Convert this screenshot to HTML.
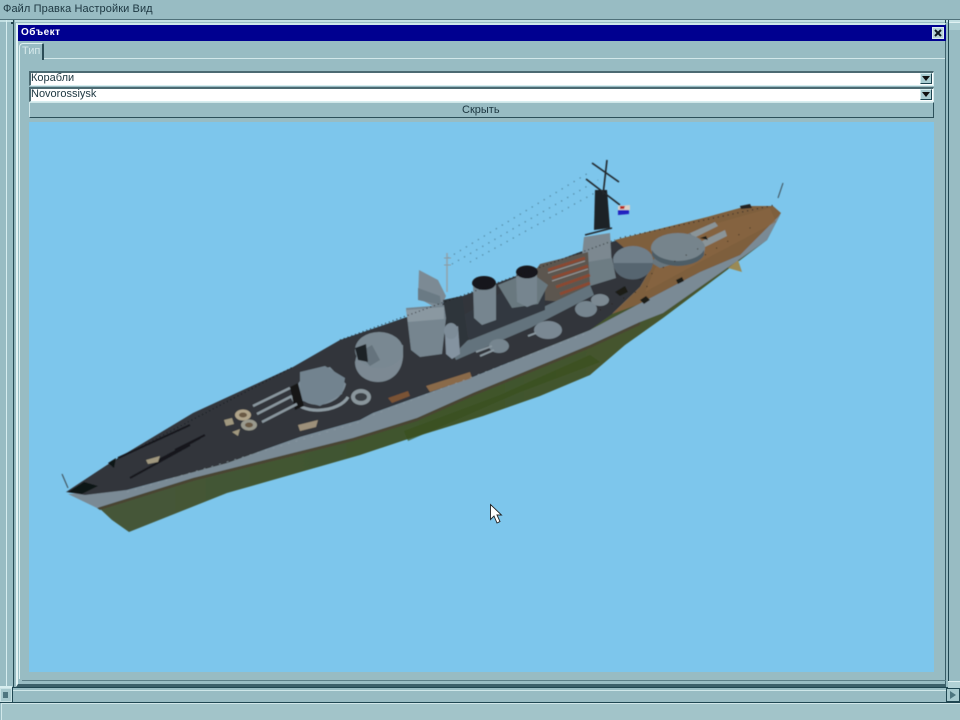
<!DOCTYPE html>
<html lang="ru"><head><meta charset="utf-8"><title>Объект</title>
<style>
html,body{margin:0;padding:0;background:#98bcc3}
#p{position:relative;width:960px;height:720px;overflow:hidden;background:#98bcc3;font-family:"Liberation Sans",sans-serif;font-size:11px;color:#1c3640}
#p div{position:absolute;box-sizing:border-box}
.t{white-space:nowrap;line-height:13px}
.arrow{background:#a9cdd2;border:1px solid;border-color:#d8eef0 #1c4450 #1c4450 #d8eef0}
.cb{background:#fff;border-top:2px solid #4b6a72;border-left:2px solid #4b6a72;border-right:1px solid #d8eef0;border-bottom:1px solid #d8eef0}
</style></head><body><div id="p">
<div class="t" style="left:3px;top:3px;letter-spacing:.1px">Файл Правка Настройки Вид</div>
<div style="left:0;top:19px;width:960px;height:1px;background:#4f717a"></div>
<div style="left:0;top:20px;width:960px;height:2px;background:#c3e0e3"></div>
<div style="left:6px;top:20px;width:1px;height:668px;background:#d6edef"></div>
<div style="left:13px;top:20px;width:1px;height:668px;background:#274c56"></div>
<div style="left:14px;top:20px;width:1px;height:668px;background:#8fb3ba"></div>
<div style="left:11px;top:22px;width:2px;height:2px;background:#23444e"></div>
<div style="left:948px;top:20px;width:1px;height:668px;background:#1f4651"></div>
<div style="left:945px;top:20px;width:1px;height:668px;background:#1f4651"></div>
<div style="left:949px;top:22px;width:11px;height:8px;background:#abcdd2;border-top:1px solid #e0f2f3"></div>
<div style="left:16px;top:23px;width:930px;height:664px;background:#98bcc3;border-left:2px solid #e4f4f5;border-top:2px solid #cfe8ea;border-right:1px solid #3e626c;border-bottom:3px solid #3c606a"></div>
<div style="left:18px;top:25px;width:928px;height:16px;background:#000090"></div>
<div class="t" style="left:21px;top:26px;color:#fff;font-weight:bold;font-size:10px;letter-spacing:.5px">Объект</div>
<div style="left:932px;top:27px;width:12px;height:12px;background:#b7d2d6;border:1px solid #dcecee"><svg width="10" height="10" style="display:block"><path d="M2 2L8 8M8 2L2 8" stroke="#101820" stroke-width="2"/></svg></div>
<div style="left:19px;top:58px;width:926px;height:1px;background:#d2e8ea"></div>
<div style="left:945px;top:58px;width:1px;height:623px;background:#375b65"></div>
<div style="left:19px;top:59px;width:1px;height:620px;background:#dff1f2"></div>
<div style="left:22px;top:680px;width:924px;height:1px;background:#5c7f88"></div>
<div style="left:19px;top:43px;width:25px;height:17px;background:#98bcc3;border-left:1px solid #dff1f2;border-top:1px solid #dff1f2;border-right:2px solid #2b4d57;border-radius:4px 2px 0 0"></div>
<div class="t" style="left:22px;top:45px;color:#d6e9eb">Тип</div>
<div class="cb" style="left:29px;top:71px;width:905px;height:15px"></div>
<div class="t" style="left:31px;top:72px">Корабли</div>
<div class="arrow" style="left:920px;top:73px;width:12px;height:11px"><svg width="10" height="9" style="display:block"><path d="M1 2H9L5 7Z" fill="#111"/></svg></div>
<div class="cb" style="left:29px;top:87px;width:905px;height:15px"></div>
<div class="t" style="left:31px;top:88px">Novorossiysk</div>
<div class="arrow" style="left:920px;top:89px;width:12px;height:11px"><svg width="10" height="9" style="display:block"><path d="M1 2H9L5 7Z" fill="#111"/></svg></div>
<div style="left:29px;top:102px;width:905px;height:16px;background:#98bcc3;border:1px solid;border-color:#cfe6e8 #2c505a #2c505a #cfe6e8"></div>
<div class="t" style="left:462px;top:104px;">Скрыть</div>
<div style="left:29px;top:122px;width:905px;height:550px;background:#7dc6ec"></div>

<svg style="position:absolute;left:0;top:0" width="960" height="720" viewBox="0 0 960 720">
<defs><filter id="b" x="-5%" y="-5%" width="110%" height="110%"><feGaussianBlur stdDeviation=".5"/></filter>
<linearGradient id="g" x1="0" y1="0" x2="1" y2="0"><stop offset="0" stop-color="#46573a"/><stop offset=".5" stop-color="#3f552c"/><stop offset="1" stop-color="#4a5430"/></linearGradient></defs>
<g filter="url(#b)">
<!-- rigging -->
<path d="M448 258L590 172M452 264L598 180M470 262L600 190" stroke="#25404c" stroke-width="1" stroke-dasharray="1 6" fill="none" opacity=".7"/>
<path d="M778 198L783 183M68 488L62 474" stroke="#3a4a50" stroke-width="1" fill="none"/>
<!-- green hull -->
<path d="M97 506L112 520L129 532L227 493L360 455L405 440L483 416L540 396L590 375L625 345L663 318L767 240L780 215L640 300L473 380L353 425L193 470Z" fill="url(#g)"/>
<path d="M404 431L500 395L590 355L600 362L520 392L408 441Z" fill="#39501f" opacity=".7"/>
<path d="M728 268L738 260L742 272L735 270Z" fill="#9a8a55"/>
<!-- grey belt -->
<path d="M68 494L97 508L193 478L353 438L417 418L473 393L590 345L640 322L663 313L767 240L781 213L740 255L700 272L637 305L590 330L473 377L373 413L360 420L300 437L227 463L127 490Z" fill="#7a8a95"/>
<path d="M97 508L193 478L353 438L417 418L473 393L590 345L640 322L640 325L590 348L473 396L417 421L353 441L193 481L100 510Z" fill="#4a4433"/>
<!-- dark deck -->
<path d="M66 492L110 463L193 413L293 367L340 340L407 317L500 282L580 252L618 240L650 270L640 287L612 314L590 330L473 377L373 413L360 420L300 437L227 463L127 490L85 495Z" fill="#30343a"/>
<!-- wood deck -->
<path d="M615 240L707 217L747 206L773 206L781 213L778 217L740 255L700 272L637 305L612 314L640 287L650 270Z" fill="#7e5f3d"/>
<path d="M655 268L700 228L770 208L776 222L700 262L645 292Z" fill="#8a6742" opacity=".55"/>
<!-- forward details -->
<path d="M688 234L715 222L718 226L694 238ZM700 242L725 230L727 236L703 248Z" fill="#8a9498"/>
<path d="M650 262L690 233L705 252L680 262L660 268Z" fill="#68767e"/>
<ellipse cx="678" cy="248" rx="27" ry="15" fill="#76848c"/><path d="M652 250A27 15 0 0 0 704 250L704 255A27 15 0 0 1 652 255Z" fill="#4e5d66"/>
<ellipse cx="633" cy="260" rx="20" ry="14" fill="#6f7f8a"/><path d="M613 263C615 285 650 285 653 263Z" fill="#56656f"/>
<path d="M640 300L646 296L650 300L644 304ZM676 280L682 277L684 281L678 284ZM700 238L706 236L708 240ZM615 292L625 286L628 292L620 296Z" fill="#1c1a18"/>
<!-- bridge & mast -->
<path d="M584 237L610 233L612 268L592 274L582 256Z" fill="#7b8890"/>
<path d="M588 262L612 258L616 278L590 286Z" fill="#6d7b83"/>
<path d="M595 190L607 190L610 228L594 230Z" fill="#1d2226"/>
<path d="M607 160L603 195M592 163L619 182M586 179L620 205M585 235L612 228" stroke="#20262a" stroke-width="1.6" fill="none"/>
<path d="M618 206L630 205L630 210L618 211Z" fill="#d8d0c8"/><path d="M618 210L629 210L629 214L618 215Z" fill="#2222c0"/><path d="M620 206L625 206L624 209L620 209Z" fill="#b92b20"/>
<!-- aft of bridge deckhouse with red -->
<path d="M540 264L588 252L590 285L565 302L540 300L522 290Z" fill="#5c5650"/>
<path d="M548 270L585 258M552 278L588 266M556 287L590 275M560 294L590 283" stroke="#8a4a33" stroke-width="3" fill="none"/>
<path d="M548 273L585 261M552 281L588 269" stroke="#9a9a9a" stroke-width="1" fill="none"/>
<!-- long superstructure -->
<path d="M450 348L520 318L590 285L594 295L530 328L456 360Z" fill="#64737d"/>
<path d="M455 320L505 290L545 290L545 310L470 340Z" fill="#33393f"/>
<path d="M498 285L530 272L548 285L538 304L512 308Z" fill="#69787f"/>
<!-- funnels -->
<path d="M473 284L496 282L496 320L482 325L474 318Z" fill="#76858f"/><ellipse cx="484" cy="283" rx="12" ry="7" fill="#14171a"/>
<path d="M516 274L537 270L537 303L527 307L517 302Z" fill="#76858f"/><ellipse cx="527" cy="272" rx="11" ry="6.500" fill="#14171a"/>
<!-- tower -->
<path d="M419 270L438 280L446 296L440 310L418 298Z" fill="#7c8a94"/>
<path d="M418 288L440 296L441 305L418 300Z" fill="#6b7a84"/>
<path d="M443 300L462 296L468 340L448 360Z" fill="#2f343a"/>
<path d="M406 308L444 305L446 318L442 354L420 357L411 350L408 325Z" fill="#76858f"/>
<path d="M406 310L444 307L444 319L408 322Z" fill="#8a98a1"/>
<path d="M445 333L458 326L460 354L452 359L446 354Z" fill="#8493a0"/><ellipse cx="451" cy="331" rx="7" ry="8" fill="#7d8c98"/>
<path d="M447 253L447 292" stroke="#93a2aa" stroke-width="1.500"/><path d="M444 265H451M444 258H451" stroke="#8a9aa2"/>
<!-- secondary turrets -->
<ellipse cx="499" cy="346" rx="10" ry="7" fill="#76858f"/><ellipse cx="548" cy="330" rx="14" ry="9" fill="#7a8893"/><ellipse cx="586" cy="309" rx="11" ry="8" fill="#76858f"/>
<path d="M476 352L492 346M480 356L494 350M528 336L536 333" stroke="#8a98a0" stroke-width="2"/>
<ellipse cx="600" cy="300" rx="9" ry="6" fill="#7b8992"/>
<!-- wood strip mid -->
<path d="M426 386L470 372L472 378L430 392Z" fill="#8a6a4a"/><path d="M388 398L408 391L410 396L392 403Z" fill="#7a5236"/>
<!-- turret 3 -->
<path d="M355 362C355 387 400 392 403 357L403 345L358 350Z" fill="#7b8993"/>
<ellipse cx="379" cy="350" rx="24" ry="18" fill="#798892"/><path d="M358 353L372 345L380 360L370 366Z" fill="#65737d"/>
<path d="M355 348L366 344L368 362L358 360Z" fill="#1e2226"/>
<ellipse cx="361" cy="397" rx="10" ry="8" fill="#8a969c"/><ellipse cx="361" cy="397" rx="6" ry="4" fill="#3a3f44"/>
<!-- turret 4 -->
<path d="M295 388C300 412 340 410 346 384L330 367L305 374Z" fill="#7b8b96"/>
<path d="M300 372L325 366L345 378L342 394L320 406L300 400Z" fill="#72838f"/>
<path d="M292 397C300 417 340 412 348 397" stroke="#8e9ba3" stroke-width="3" fill="none"/>
<path d="M290 387L298 383L304 406L295 410Z" fill="#151719"/>
<path d="M253 406L290 388M257 414L292 396M262 422L297 404" stroke="#8a979f" stroke-width="2.400"/>
<ellipse cx="243" cy="415" rx="8" ry="5.500" fill="#b0a48a"/><ellipse cx="249" cy="425" rx="8" ry="5.500" fill="#9a9a8e"/><ellipse cx="243" cy="415" rx="4" ry="2.500" fill="#6a5a44"/><ellipse cx="249" cy="425" rx="4" ry="2.500" fill="#6a5a44"/>
<path d="M298 425L318 420L316 427L300 431Z" fill="#9d907a"/>
<!-- foredeck fittings -->
<path d="M118 458L190 425M155 462L200 438M130 478L190 445M175 450L205 435" stroke="#17191c" stroke-width="2" fill="none"/>
<path d="M146 460L160 456L158 462L148 464ZM224 420L232 418L234 424L226 426ZM232 432L240 429L238 436Z" fill="#a0987f"/>
<path d="M108 463L116 458L114 468ZM68 492L84 482L98 486L82 494Z" fill="#101215"/>
<path d="M127 492L360 422M373 415L590 332" stroke="#8b9aa3" stroke-width="1" stroke-dasharray="2 6" opacity=".7"/>
<path d="M110 463L293 367M340 340L615 240" stroke="#14171a" stroke-width="1.200" stroke-dasharray="1 3" opacity=".8" fill="none"/>
<path d="M620 238L775 205" stroke="#222" stroke-width="1.200" stroke-dasharray="1 4" fill="none"/>
<path d="M740 206L750 204L752 208L741 209Z" fill="#222"/>
<path d="M640 280L705 245M705 255L760 222M600 310L650 285" stroke="#2c241b" stroke-width="1" stroke-dasharray="1 12" fill="none"/>
</g>
<path d="M490.500 504.500V519.500L494 516L497 523L500 521.500L497 515H501.500Z" fill="#fff" stroke="#222" stroke-width=".9"/>
</svg>

<!-- bottom bars -->
<div style="left:0;top:686px;width:12px;height:2px;background:#d6edef"></div>
<div style="left:0;top:688px;width:12px;height:14px;background:#a6c9ce;border:1px solid #c8e2e5"><svg width="10" height="12" style="display:block"><rect x="2" y="3" width="5" height="6" fill="#4e7680"/></svg></div>
<div style="left:12px;top:687px;width:936px;height:1px;background:#1f4651"></div>
<div style="left:12px;top:688px;width:1px;height:15px;background:#1f4651"></div>
<div style="left:13px;top:690px;width:933px;height:1px;background:#cfe7e9"></div>
<div style="left:946px;top:688px;width:14px;height:14px;background:#a6c9ce;border:1px solid #1f4651"><svg width="12" height="12" style="display:block"><path d="M3 2L9 6L3 10Z" fill="#4e7680"/></svg></div>
<div style="left:948px;top:681px;width:12px;height:7px;background:#b2d1d5;border-top:1px solid #dff0f1"></div>
<div style="left:0;top:702px;width:960px;height:1px;background:#1f4651"></div>
<div style="left:1px;top:703px;width:959px;height:17px;background:#a2c4c9;border-top:1px solid #d2e8ea;border-left:1px solid #d2e8ea"></div>
</div></body></html>
